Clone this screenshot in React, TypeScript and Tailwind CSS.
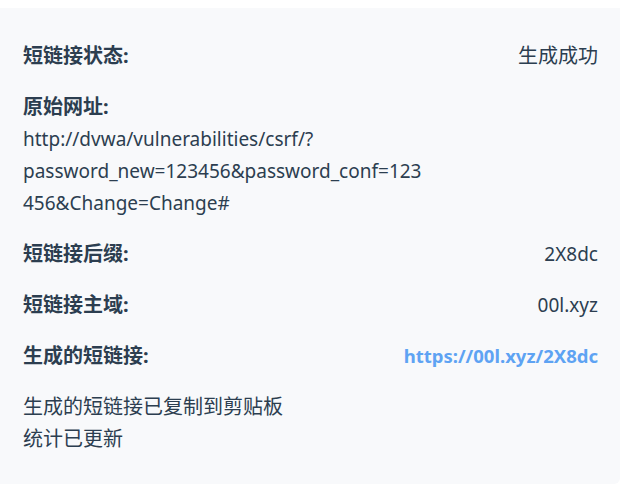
const rows = [
  { label: '短链接后缀:', value: '2X8dc' },
  { label: '短链接主域:', value: '00l.xyz' },
];

export default function App() {
  return (
    <div
      className="min-h-[494px] bg-white pt-2 text-[20px] text-[#2c3e50]"
      style={{ fontFamily: '"Noto Sans", "Noto Sans CJK SC", sans-serif' }}
    >
      <div className="w-[620px] rounded-br-md bg-[#f8f9fb] pb-[29px] pl-[23px] pr-[22px] pt-8">
        <div className="flex flex-col gap-[19px] leading-8">
          {/* status */}
          <div className="flex items-center justify-between">
            <span className="font-bold">短链接状态:</span>
            <span>生成成功</span>
          </div>

          {/* original url */}
          <div>
            <div className="font-bold">原始网址:</div>
            <div className="whitespace-nowrap text-[19px]">
              <div>http://dvwa/vulnerabilities/csrf/?</div>
              <div>password_new=123456&amp;password_conf=123</div>
              <div>456&amp;Change=Change#</div>
            </div>
          </div>

          {rows.map((row) => (
            <div key={row.label} className="flex items-center justify-between">
              <span className="font-bold">{row.label}</span>
              <span className="text-[19px]">{row.value}</span>
            </div>
          ))}

          {/* short link */}
          <div className="flex items-center justify-between">
            <span className="font-bold">生成的短链接:</span>
            <a className="text-[18.5px] font-bold text-[#5ea3f3]">https://00l.xyz/2X8dc</a>
          </div>

          {/* messages */}
          <div>
            <div>生成的短链接已复制到剪贴板</div>
            <div>统计已更新</div>
          </div>
        </div>
      </div>
    </div>
  );
}
